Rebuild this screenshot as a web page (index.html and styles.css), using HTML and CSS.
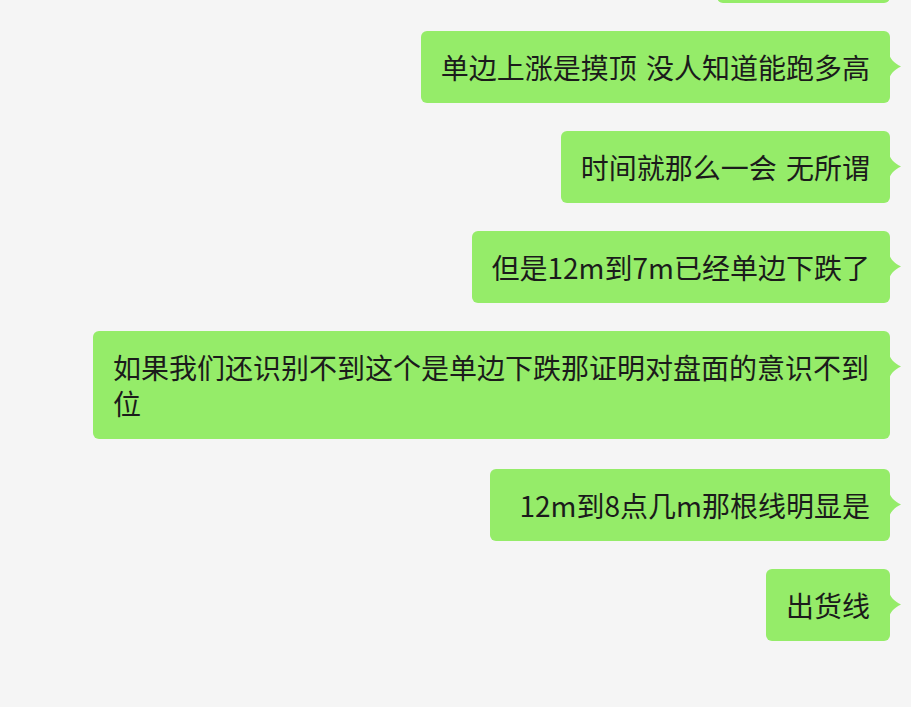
FILE: index.html
```html
<!DOCTYPE html>
<html lang="zh-CN">
<head>
  <meta charset="UTF-8">
  <title>聊天</title>
  <link rel="stylesheet" href="styles.css">
</head>
<body>

<div class="chat">

  <!--上一条，滚出去了，只露出底边-->
  <div class="msg">
    <div class="bubble bubble-cut"></div>
  </div>

  <div class="msg">
    <div class="bubble">单边上涨是摸顶 没人知道能跑多高</div>
  </div>

  <div class="msg">
    <div class="bubble">时间就那么一会 无所谓</div>
  </div>

  <div class="msg">
    <div class="bubble">但是12m到7m已经单边下跌了</div>
  </div>

  <div class="msg msg-long">
    <div class="bubble">如果我们还识别不到这个是单边下跌那证明对盘面的意识不到位</div>
  </div>

  <div class="msg">
    <div class="bubble">&nbsp;12m到8点几m那根线明显是</div>
  </div>

  <div class="msg">
    <div class="bubble">出货线</div>
  </div>

</div>

</body>
</html>
```

FILE: styles.css
```css
* {
  margin: 0;
  padding: 0;
  box-sizing: border-box;
}

html,
body {
  height: 100%;
  overflow: hidden;
}

body {
  background-color: #f5f5f5;
  font-family: "Noto Sans CJK SC", "Noto Sans", sans-serif;
  color: #1b1b1b;
}

/*消息列表，整体往上滚了一点*/
.chat {
  display: flex;
  flex-direction: column;
  align-items: flex-end;
  gap: 28px;
  margin-top: -69px;
  padding-right: 21px;
}

.msg {
  display: flex;
  justify-content: flex-end;
  width: 100%;
}

/*两行的那条下面多留一点*/
.msg-long {
  margin-bottom: 2px;
}

/*绿色气泡*/
.bubble {
  position: relative;
  max-width: 797px;
  padding: 18px 20px;
  background-color: #95ec69;
  border-radius: 6px;
  font-size: 28px;
  line-height: 36px;
  word-spacing: 3px;
  word-break: break-all;
}

/*只看得到底边的那一条*/
.bubble-cut {
  width: 173px;
  height: 72px;
}

/*右边的小尖角*/
.bubble::after {
  content: "";
  position: absolute;
  top: 22px;
  right: -11px;
  width: 12px;
  height: 27px;
  background-color: #95ec69;
  clip-path: path("M0 0 C1 6 5 10 12 13.5 C5 17 1 21 0 27 Z");
}
```
